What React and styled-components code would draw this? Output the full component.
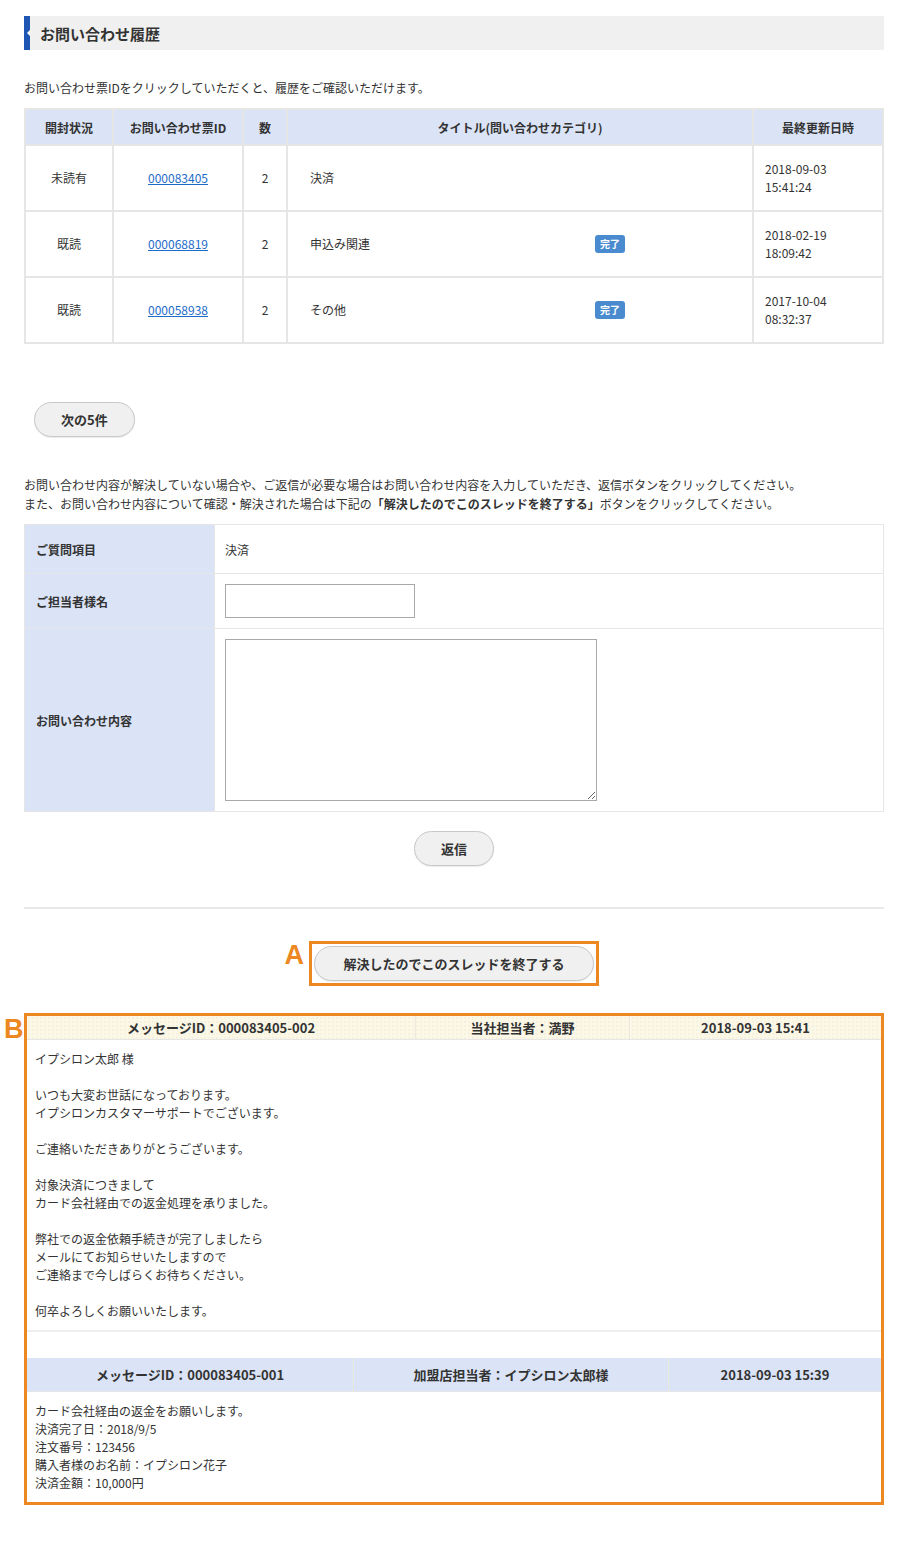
import styled, { createGlobalStyle } from "styled-components";

const GlobalStyle = createGlobalStyle`
  body {
    margin: 0;
    background: #fff;
    color: #333;
    font-family: "Noto Sans CJK JP", "Noto Sans", sans-serif;
    font-size: 12px;
  }
  * { box-sizing: border-box; }
`;

const tickets = [
  { status: "未読有", id: "000083405", count: 2, title: "決済", done: false, date: "2018-09-03", time: "15:41:24" },
  { status: "既読", id: "000068819", count: 2, title: "申込み関連", done: true, date: "2018-02-19", time: "18:09:42" },
  { status: "既読", id: "000058938", count: 2, title: "その他", done: true, date: "2017-10-04", time: "08:32:37" },
];

const App = () => (
  <>
    <GlobalStyle />
    <Page>
      <Heading>お問い合わせ履歴</Heading>
      <Lead>お問い合わせ票IDをクリックしていただくと、履歴をご確認いただけます。</Lead>

      <HistoryTable>
        <colgroup>
          <col style={{ width: 88 }} />
          <col style={{ width: 130 }} />
          <col style={{ width: 44 }} />
          <col />
          <col style={{ width: 130 }} />
        </colgroup>
        <thead>
          <tr>
            <Th>開封状況</Th>
            <Th>お問い合わせ票ID</Th>
            <Th>数</Th>
            <Th>タイトル(問い合わせカテゴリ)</Th>
            <Th>最終更新日時</Th>
          </tr>
        </thead>
        <tbody>
          {tickets.map((t) => (
            <tr key={t.id}>
              <Td>{t.status}</Td>
              <Td>
                <TicketLink href="#">{t.id}</TicketLink>
              </Td>
              <Td>{t.count}</Td>
              <Td $left>
                <TitleLine>
                  <TitleText>{t.title}</TitleText>
                  {t.done && <Badge>完了</Badge>}
                </TitleLine>
              </Td>
              <Td $left>
                {t.date}
                <br />
                {t.time}
              </Td>
            </tr>
          ))}
        </tbody>
      </HistoryTable>

      <NextRow>
        <PillButton>次の5件</PillButton>
      </NextRow>

      <Note>
        お問い合わせ内容が解決していない場合や、ご返信が必要な場合はお問い合わせ内容を入力していただき、返信ボタンをクリックしてください。
        <br />
        また、お問い合わせ内容について確認・解決された場合は下記の<strong>「解決したのでこのスレッドを終了する」</strong>ボタンをクリックしてください。
      </Note>

      <FormTable>
        <tbody>
          <tr>
            <LabelCell $h={49}>ご質問項目</LabelCell>
            <ValueCell>決済</ValueCell>
          </tr>
          <tr>
            <LabelCell $h={55}>ご担当者様名</LabelCell>
            <ValueCell>
              <NameInput type="text" />
            </ValueCell>
          </tr>
          <tr>
            <LabelCell $h={183}>お問い合わせ内容</LabelCell>
            <ValueCell>
              <BodyArea />
            </ValueCell>
          </tr>
        </tbody>
      </FormTable>

      <CenterRow>
        <PillButton>返信</PillButton>
      </CenterRow>

      <Divider />

      <CloseRow>
        <Marked>
          <Mark>A</Mark>
          <PillButton $wide>解決したのでこのスレッドを終了する</PillButton>
        </Marked>
      </CloseRow>

      <Thread>
        <Mark $side>B</Mark>
        <MsgHeader $cols="388px 214px 1fr" $h={24} $cream>
          <HeadCell>メッセージID：000083405-002</HeadCell>
          <HeadCell>当社担当者：満野</HeadCell>
          <HeadCell>2018-09-03 15:41</HeadCell>
        </MsgHeader>
        <MsgBody $divided>
          <p>イプシロン太郎 様</p>
          <p>
            いつも大変お世話になっております。
            <br />
            イプシロンカスタマーサポートでございます。
          </p>
          <p>ご連絡いただきありがとうございます。</p>
          <p>
            対象決済につきまして
            <br />
            カード会社経由での返金処理を承りました。
          </p>
          <p>
            弊社での返金依頼手続きが完了しましたら
            <br />
            メールにてお知らせいたしますので
            <br />
            ご連絡まで今しばらくお待ちください。
          </p>
          <p>何卒よろしくお願いいたします。</p>
        </MsgBody>
        <MsgHeader $cols="326px 315px 1fr" $h={34} $gap>
          <HeadCell>メッセージID：000083405-001</HeadCell>
          <HeadCell>加盟店担当者：イプシロン太郎様</HeadCell>
          <HeadCell>2018-09-03 15:39</HeadCell>
        </MsgHeader>
        <MsgBody>
          <p>
            カード会社経由の返金をお願いします。
            <br />
            決済完了日：2018/9/5
            <br />
            注文番号：123456
            <br />
            購入者様のお名前：イプシロン花子
            <br />
            決済金額：10,000円
          </p>
        </MsgBody>
      </Thread>
    </Page>
  </>
);

const Page = styled.div`
  width: 860px;
  margin: 0 24px 0 24px;
  padding: 16px 0 40px;
`;

const Heading = styled.h2`
  position: relative;
  margin: 0;
  height: 34px;
  padding-left: 10px;
  display: flex;
  align-items: center;
  background: #f0f0f0;
  border-left: 6px solid #1f56b3;
  font-size: 15px;
  font-weight: bold;
  color: #333;

  &::before {
    content: "";
    position: absolute;
    left: -3px;
    top: 14px;
    border-style: solid;
    border-width: 3px 3px 3px 0;
    border-color: transparent #fff transparent transparent;
  }
`;

const Lead = styled.p`
  margin: 29px 0 11px;
  line-height: 18px;
`;

const HistoryTable = styled.table`
  width: 100%;
  border-collapse: collapse;
  table-layout: fixed;
  border: 2px solid #e6e6e6;
`;

const Th = styled.th`
  height: 36px;
  background: #dbe4f7;
  border: 2px solid #e6e6e6;
  font-weight: bold;
  font-size: 12px;
  text-align: center;
  padding: 0;
`;

const Td = styled.td`
  height: 66px;
  border: 2px solid #e6e6e6;
  text-align: ${(p) => (p.$left ? "left" : "center")};
  padding: 0 ${(p) => (p.$left ? "11px" : "0")};
  line-height: 18px;
  font-size: 12px;
`;

const TicketLink = styled.a`
  color: #1d6bc8;
  text-decoration: underline;
`;

const TitleLine = styled.div`
  display: flex;
  align-items: center;
  padding-left: 11px;
`;

const TitleText = styled.span`
  width: 285px;
`;

const Badge = styled.span`
  display: inline-flex;
  align-items: center;
  justify-content: center;
  width: 30px;
  height: 18px;
  border-radius: 3px;
  background: #4a8bd0;
  color: #fff;
  font-size: 10px;
  font-weight: bold;
`;

const NextRow = styled.div`
  padding: 58px 0 0 10px;
`;

const PillButton = styled.button`
  height: 35px;
  padding: 0 ${(p) => (p.$wide ? "28px" : "26px")};
  min-width: 78px;
  border: 1px solid #c8c8c8;
  border-radius: 18px;
  background: #f0f0f0;
  box-shadow: 0 1px 1px rgba(0, 0, 0, 0.08);
  font-family: inherit;
  font-size: 13px;
  font-weight: bold;
  color: #333;
  cursor: pointer;
`;

const Note = styled.p`
  margin: 38px 0 11px;
  line-height: 19px;

  strong {
    font-weight: bold;
  }
`;

const FormTable = styled.table`
  width: 100%;
  border-collapse: collapse;
  border: 1px solid #e6e6e6;
`;

const LabelCell = styled.th`
  width: 190px;
  height: ${(p) => p.$h}px;
  background: #dbe4f7;
  border: 1px solid #e6e6e6;
  text-align: left;
  padding: 0 11px;
  font-weight: bold;
  font-size: 12px;
`;

const ValueCell = styled.td`
  border: 1px solid #e6e6e6;
  padding: 0 10px;
  font-size: 12px;
  vertical-align: middle;
`;

const NameInput = styled.input`
  display: block;
  width: 190px;
  height: 34px;
  border: 1px solid #a9a9a9;
  font-family: inherit;
`;

const BodyArea = styled.textarea`
  display: block;
  width: 372px;
  height: 162px;
  border: 1px solid #a9a9a9;
  font-family: inherit;
  resize: both;
`;

const CenterRow = styled.div`
  display: flex;
  justify-content: center;
  padding-top: 19px;
`;

const Divider = styled.hr`
  margin: 41px 0 0;
  border: 0;
  border-top: 2px solid #e8e8e8;
`;

const CloseRow = styled.div`
  display: flex;
  justify-content: center;
  padding: 32px 0 27px;
`;

const Marked = styled.div`
  position: relative;
  padding: 2px 2px;
  border: 3px solid #ec8722;
`;

const Mark = styled.span`
  position: absolute;
  left: ${(p) => (p.$side ? "-23px" : "-28px")};
  top: ${(p) => (p.$side ? "0px" : "-2px")};
  color: #ec8722;
  font-family: "Liberation Sans", Arial, sans-serif;
  font-size: 27px;
  font-weight: bold;
  line-height: 1;
`;

const Thread = styled.div`
  position: relative;
  border: 3px solid #ec8722;
`;

const MsgHeader = styled.div`
  display: grid;
  grid-template-columns: ${(p) => p.$cols};
  height: ${(p) => p.$h}px;
  margin-top: ${(p) => (p.$gap ? "26px" : "0")};
  background-color: ${(p) => (p.$cream ? "#fbf8e8" : "#dbe4f7")};
  background-image: ${(p) =>
    p.$cream ? "radial-gradient(#efe9cf 0.6px, transparent 0.8px)" : "none"};
  background-size: 4px 4px;
  border-bottom: 1px solid #e6e6e6;
`;

const HeadCell = styled.div`
  display: flex;
  align-items: center;
  justify-content: center;
  font-size: 13px;
  font-weight: bold;
  border-left: 1px solid #ebe8dc;

  &:first-child {
    border-left: 0;
  }
`;

const MsgBody = styled.div`
  padding: 10px 8px 10px;
  border-bottom: ${(p) => (p.$divided ? "2px solid #eeeeee" : "0")};
  line-height: 18px;

  p {
    margin: 0 0 18px;
  }

  p:last-child {
    margin-bottom: 0;
  }
`;

export default App;
